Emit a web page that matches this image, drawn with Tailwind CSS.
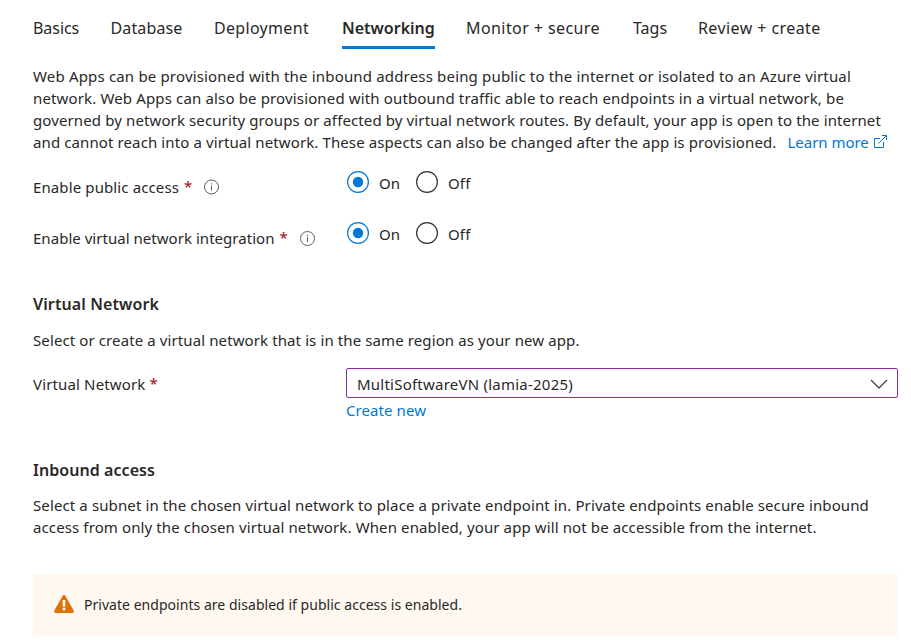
<!DOCTYPE html>
<html lang="en">
<head>
<meta charset="utf-8">
<title>Create Web App - Networking</title>
<script src="https://cdn.jsdelivr.net/npm/@tailwindcss/browser@4"></script>
</head>
<body class="bg-white font-['Noto_Sans',sans-serif] text-[15px] leading-[22px] text-[#292827]">
<main class="w-[898px] pl-[33px] pt-[17px] whitespace-nowrap">
  <nav class="flex h-8 text-base leading-[22px]">
    <a class="w-[77.5px] tracking-[-0.05px]">Basics</a>
    <a class="w-[103.5px] tracking-[0.135px]">Database</a>
    <a class="w-32 tracking-[0.316px]">Deployment</a>
    <a class="mr-[31px] w-[93px] border-b-3 border-[#0078d4] font-semibold">Networking</a>
    <a class="w-[167px] tracking-[0.418px]">Monitor + secure</a>
    <a class="w-[65px]">Tags</a>
    <a class="tracking-[0.42px]">Review + create</a>
  </nav>

  <div class="mt-4">
    <p class="tracking-[0.172px]">Web Apps can be provisioned with the inbound address being public to the internet or isolated to an Azure virtual</p>
    <p class="tracking-[0.146px]">network. Web Apps can also be provisioned with outbound traffic able to reach endpoints in a virtual network, be</p>
    <p class="tracking-[0.116px]">governed by network security groups or affected by virtual network routes. By default, your app is open to the internet</p>
    <p class="flex"><span class="w-[754.5px] tracking-[0.108px]">and cannot reach into a virtual network. These aspects can also be changed after the app is provisioned.</span>
      <a class="flex text-[#0078d4]"><span class="w-[86.5px] tracking-[-0.03px]">Learn more</span>
        <svg class="mt-1" width="13" height="13" viewBox="0 0 13 13" fill="none" stroke="currentColor"><path d="M6 3.5H.5v9h9V7M4.5 8.5l8-8M8 .5h4.5V5"/></svg></a></p>
  </div>

  <div class="mt-[18px] flex h-[51px]">
    <div class="flex w-[314px] pt-[5px]"><span class="tracking-[0.116px]">Enable public access</span><span class="-mt-px ml-[5px] font-medium text-[#a4262c]">*</span>
      <svg class="ml-[11px] mt-[3px]" width="16" height="16" viewBox="0 0 16 16" fill="none" stroke="#605e5c"><circle cx="8.5" cy="8" r="7"/><path d="M8.5 6.7V11.5M8.5 4.3v1.2"/></svg></div>
    <div class="flex pt-px">
      <svg class="mr-2.5 -mt-px" width="22" height="22" viewBox="0 0 22 22"><circle cx="11" cy="11" r="10.4" fill="none" stroke="#0078d4" stroke-width="1.2"/><circle cx="11" cy="11" r="5.2" fill="#0078d4"/></svg>
      <span class="w-[37px]">On</span>
      <svg class="mr-2.5 -mt-px" width="22" height="22" viewBox="0 0 22 22"><circle cx="11" cy="11" r="10.4" fill="none" stroke="#323130" stroke-width="1.2"/></svg>
      <span class="tracking-[0.15px]">Off</span>
    </div>
  </div>
  <div class="flex h-[71px]">
    <div class="flex w-[314px] pt-[5px]"><span class="tracking-[0.034px]">Enable virtual network integration</span><span class="-mt-px ml-[5px] font-medium text-[#a4262c]">*</span>
      <svg class="ml-[11px] mt-[3px]" width="16" height="16" viewBox="0 0 16 16" fill="none" stroke="#605e5c"><circle cx="8.5" cy="8.5" r="7"/><path d="M8.5 7.2V12M8.5 4.8v1.2"/></svg></div>
    <div class="flex pt-px">
      <svg class="mr-2.5 -mt-px" width="22" height="22" viewBox="0 0 22 22"><circle cx="11" cy="11" r="10.4" fill="none" stroke="#0078d4" stroke-width="1.2"/><circle cx="11" cy="11" r="5.2" fill="#0078d4"/></svg>
      <span class="w-[37px]">On</span>
      <svg class="mr-2.5 -mt-px" width="22" height="22" viewBox="0 0 22 22"><circle cx="11" cy="11" r="10.4" fill="none" stroke="#323130" stroke-width="1.2"/></svg>
      <span class="tracking-[0.15px]">Off</span>
    </div>
  </div>

  <h2 class="text-base leading-[22px] font-semibold tracking-[0.108px]">Virtual Network</h2>
  <p class="mt-3.5 tracking-[0.107px]">Select or create a virtual network that is in the same region as your new app.</p>
  <div class="mt-[17px] flex">
    <div class="flex w-[313px] pt-[5px]"><span class="tracking-[0.148px]">Virtual Network</span><span class="-mt-px ml-[4px] font-medium text-[#a4262c]">*</span></div>
    <div class="flex-1">
      <div class="flex h-[30px] items-center justify-between rounded-[2px] border border-[#8a2da5] pl-2.5 pr-[9px]"><span class="pt-[2px] tracking-[0.231px]">MultiSoftwareVN (lamia-2025)</span>
        <svg class="mt-px" width="18" height="10" viewBox="0 0 18 10" fill="none" stroke="#484644" stroke-width="1.3"><path d="M1 1l8 8 8-8"/></svg></div>
      <a class="mt-px block tracking-[0.075px] text-[#0078d4]">Create new</a>
    </div>
  </div>

  <h2 class="mt-[38px] text-base leading-[22px] font-semibold tracking-[0.059px]">Inbound access</h2>
  <div class="mt-[13px]">
    <p class="tracking-[0.116px]">Select a subnet in the chosen virtual network to place a private endpoint in. Private endpoints enable secure inbound</p>
    <p class="tracking-[0.115px]">access from only the chosen virtual network. When enabled, your app will not be accessible from the internet.</p>
  </div>

  <div class="mt-9 flex h-[62px] items-center rounded-[2px] bg-[#fff8f0] pl-[21px] text-sm leading-[22px]">
    <svg class="-mt-0.5 mr-2.5" width="20" height="18" viewBox="0 0 20 18"><path d="M8.5 1Q10-.8 11.5 1L19.7 15.5Q20.4 17.8 18.3 18H1.7Q-.4 17.8.3 15.5Z" fill="#db7500"/><path d="M10 5v6.5M10 12.8v2.4" stroke="#fff" stroke-width="2.6" fill="none"/></svg>
    <span class="tracking-[0.034px]">Private endpoints are disabled if public access is enabled.</span>
  </div>
</main>
</body>
</html>
